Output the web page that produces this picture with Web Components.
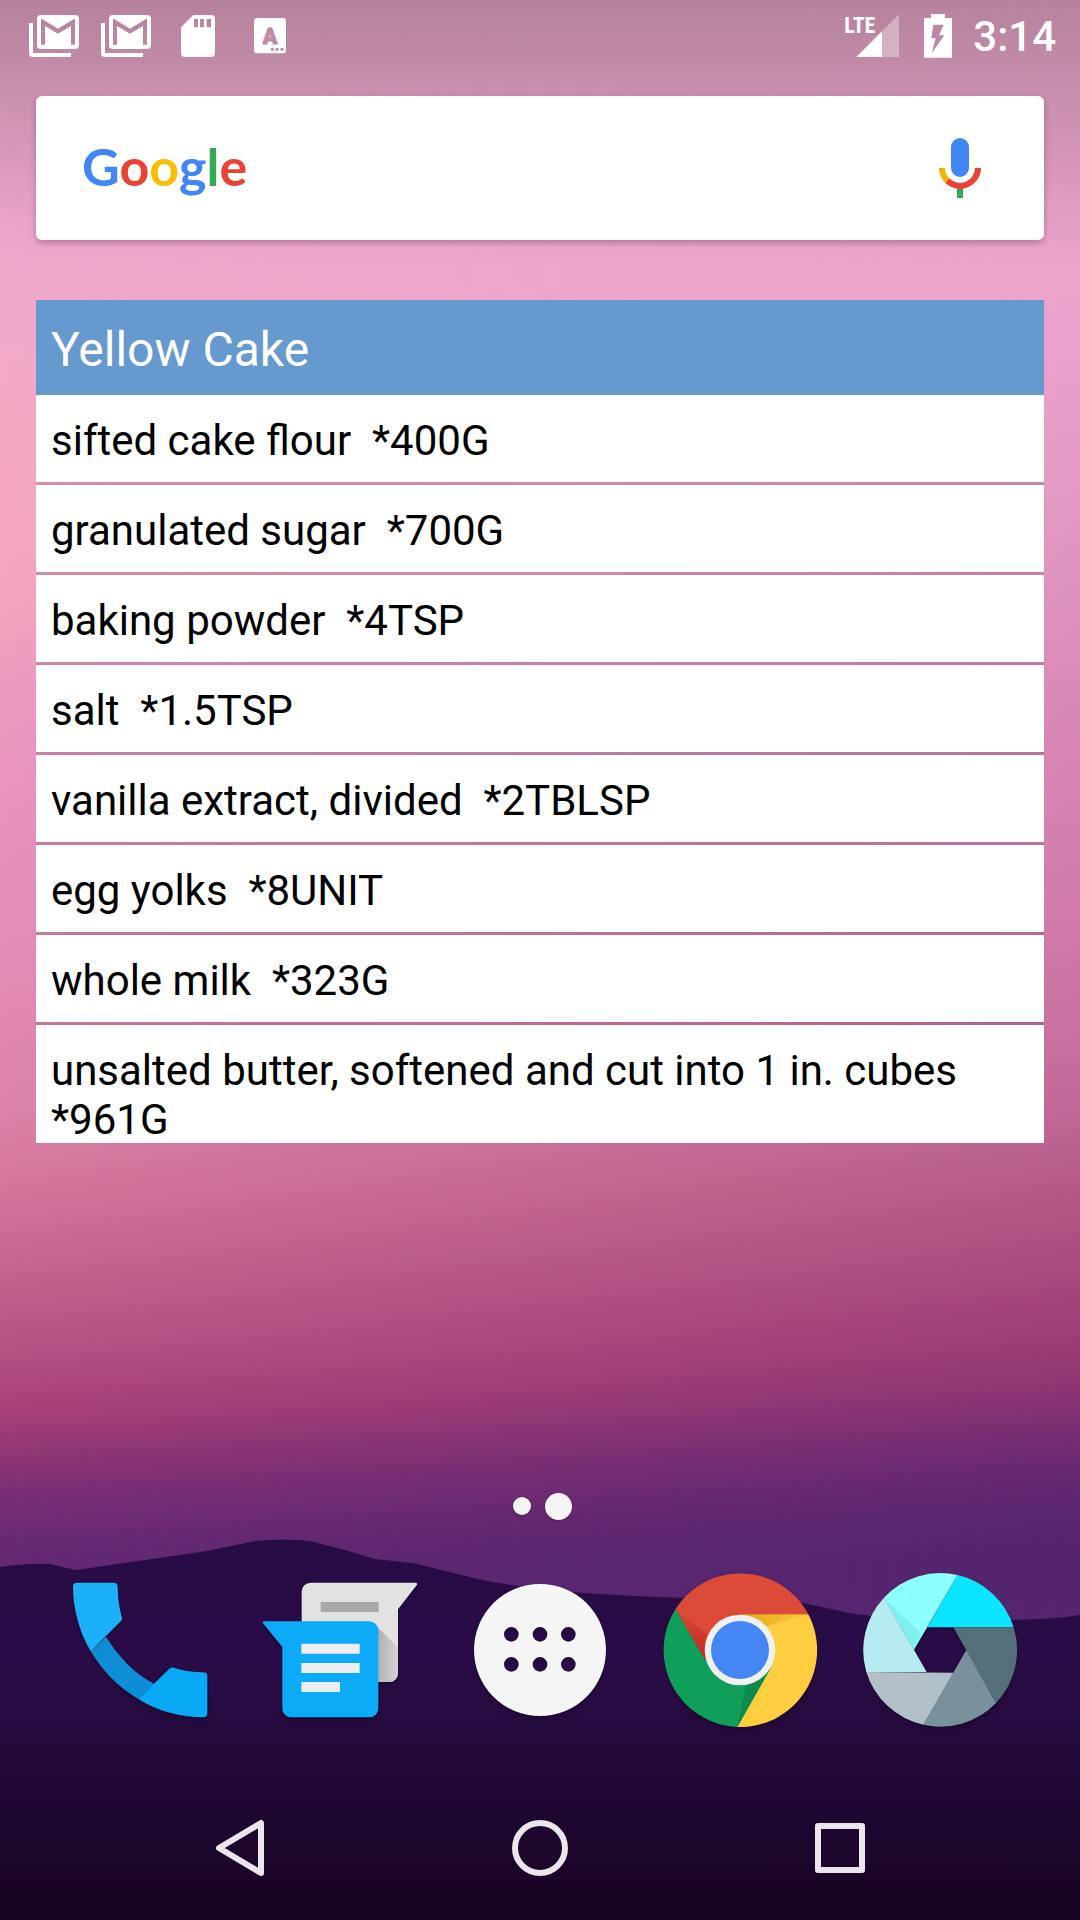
<!DOCTYPE html>
<html lang="en">
<head>
<meta charset="utf-8">
<meta name="viewport" content="width=device-width, initial-scale=1">
<title>Home screen</title>
<style>
  body { margin: 0; font-family: Roboto, "Noto Sans", sans-serif; }
</style>
</head>
<body>
<home-screen>
  <status-bar slot="status" time="3:14"></status-bar>
  <search-widget></search-widget>
  <recipe-widget heading="Yellow Cake">
    <recipe-item>sifted cake flour  *400G</recipe-item>
    <recipe-item>granulated sugar  *700G</recipe-item>
    <recipe-item>baking powder  *4TSP</recipe-item>
    <recipe-item>salt  *1.5TSP</recipe-item>
    <recipe-item>vanilla extract, divided  *2TBLSP</recipe-item>
    <recipe-item>egg yolks  *8UNIT</recipe-item>
    <recipe-item>whole milk  *323G</recipe-item>
    <recipe-item>unsalted butter, softened and cut into 1 in. cubes  *961G</recipe-item>
  </recipe-widget>
  <page-dots slot="bottom"></page-dots>
  <app-dock slot="bottom"></app-dock>
  <nav-bar slot="bottom"></nav-bar>
</home-screen>

<script>
const define = (name, markup, setup) => {
  const template = document.createElement('template');
  template.innerHTML = markup.trim();
  customElements.define(name, class extends HTMLElement {
    constructor() {
      super();
      this.attachShadow({ mode: 'open' }).append(template.content.cloneNode(true));
    }
    connectedCallback() { if (setup) setup(this, this.shadowRoot); }
  });
};

define('wall-paper', `
<style>
  :host { display: block; overflow: hidden; }
  .left, .right, svg { position: absolute; inset: 0; width: 100%; height: 100%; }
  .left { background: linear-gradient(#b6839d 0%, #be88a4 2.5%, #ca92af 5%, #db9abc 8.3%, #eaa4c7 11.5%, #f0a8cb 14%, #f3aac9 18%, #f6a8c2 25%, #f4a4bf 31%, #ec98bf 37%, #e78fbb 46%, #e389b1 53%, #dc82a7 58%, #d4769b 62%, #c4668e 66%, #b75485 70%, #ae457b 72.5%, #a8407a 73.6%, #983a76 75%, #8a3374 76.4%, #7b2f75 77.7%, #672a74 80.4%, #5d2673 85%); }
  .right { background: linear-gradient(#b6839d 0%, #be88a4 2.5%, #c88faf 5%, #d595b8 8.3%, #e49fc5 11.5%, #eba4ca 14%, #e9a2cb 18%, #e49ac5 25%, #de92bf 31%, #d888b7 37%, #d27cad 46%, #ca72a2 53%, #c06796 58%, #b45985 62%, #a84b7e 66%, #a1437a 68%, #993b74 70.4%, #8c3473 72.5%, #752d72 74.7%, #672972 76.4%, #58266e 79%, #53246d 81.5%, #56266f 85%);
    -webkit-mask: linear-gradient(90deg, transparent, #000); mask: linear-gradient(90deg, transparent, #000); }
</style>
<div class="left"></div><div class="right"></div>
<svg viewBox="0 0 1080 1920" preserveAspectRatio="none" aria-hidden="true">
  <defs><linearGradient id="hill" x1="0" y1="0" x2="0" y2="1">
    <stop offset="0" stop-color="#280c44"/><stop offset=".3" stop-color="#2a0c48"/><stop offset=".55" stop-color="#240a3c"/>
    <stop offset=".72" stop-color="#1e0730"/><stop offset="1" stop-color="#190322"/></linearGradient></defs>
  <path fill="url(#hill)" d="M0 1567 Q30 1563 50 1564 L76 1570 L207 1551 L255 1541 Q285 1538 310 1541 L345 1550 L375 1559 L413 1563 L482 1580 Q530 1589 585 1593 Q640 1597 690 1598 L758 1598 L803 1603 L850 1613 Q880 1619 1000 1620 Q1050 1620 1080 1615 V1920 H0Z"/>
</svg>`);

define('home-screen', `
<style>
  :host { display: block; position: relative; isolation: isolate; }
  wall-paper { position: absolute; inset: 0; z-index: -1; }
  .screen { display: flex; flex-direction: column; min-height: 100vh; }
  main { display: flex; flex-direction: column; gap: 60px; padding: 24px 36px; flex: 1; }
</style>
<wall-paper></wall-paper>
<div class="screen">
  <slot name="status"></slot>
  <main><slot></slot></main>
  <footer><slot name="bottom"></slot></footer>
</div>`);

define('status-bar', `
<style>
  :host { display: flex; justify-content: space-between; height: 72px; padding: 0 24px 0 18px; color: #fff; }
  div { display: flex; align-items: center; }
  .system { gap: 18px; }
  svg { display: block; height: 72px; fill: #fff; }
  time { font-size: 42px; line-height: 48px; font-weight: 500; padding-top: 2px; }
  .lte { font: 700 66px "Roboto Condensed", "Liberation Sans Narrow", "Open Sans Condensed", "Liberation Sans", sans-serif; }
  .key { font: 900 64px Roboto, sans-serif; fill: #bf8aa6; stroke: #bf8aa6; stroke-width: 3; stroke-linejoin: round; }
</style>
<div>
  <svg width="72" viewBox="54 0 216 216" role="img" aria-label="Gmail"><path d="M87 69h12v90h114v12H99q-12 0-12-12z"/><path fill-rule="evenodd" d="M123 45H225q12 0 12 12V135q0 12-12 12H123q-12 0-12-12V57q0-12 12-12zM123 57V134H135V78L174 101L213 78V134H225V57H222L174 86L126 57z"/></svg>
  <svg width="72" viewBox="54 0 216 216" role="img" aria-label="Gmail"><path d="M87 69h12v90h114v12H99q-12 0-12-12z"/><path fill-rule="evenodd" d="M123 45H225q12 0 12 12V135q0 12-12 12H123q-12 0-12-12V57q0-12 12-12zM123 57V134H135V78L174 101L213 78V134H225V57H222L174 86L126 57z"/></svg>
  <svg width="72" viewBox="486 0 216 216" role="img" aria-label="SD card"><path fill-rule="evenodd" d="M580 45H633q12 0 12 12V159q0 12-12 12H555q-12 0-12-12V82zM582 57V82H594V57zM600 57V82H612V57zM620 57V82H633V57z"/></svg>
  <svg width="72" viewBox="702 0 216 216" role="img" aria-label="Keyboard"><rect x="762" y="54" width="96" height="106" rx="9"/><text class="key" x="810" y="131" text-anchor="middle">A</text><g fill="#bf8aa6"><circle cx="817" cy="148" r="5"/><circle cx="831" cy="148" r="5"/><circle cx="846" cy="148" r="5"/></g></svg>
</div>
<div class="system">
  <svg width="62" viewBox="240 0 186 216" role="img" aria-label="Signal"><path opacity=".35" d="M363 94L414 43V171H363z"/><path d="M286 171L363 94V171z"/><text class="lte" x="250" y="99">LTE</text></svg>
  <svg width="34" viewBox="480 0 102 216" role="img" aria-label="Charging"><path fill-rule="evenodd" d="M510 42H552V54H573V173H489V54H510zM517 74L511 115H524L512 160L550 106H534L548 74z"/></svg>
  <time></time>
</div>`, (host, root) => { root.querySelector('time').textContent = host.getAttribute('time'); });

define('search-widget', `
<style>
  :host { display: flex; align-items: center; justify-content: space-between; height: 144px; box-sizing: border-box; padding: 0 54px 0 46px; background: #fff; border-radius: 6px; box-shadow: 0 3px 6px rgba(60,20,50,.3); }
  button { border: 0; padding: 0; background: none; display: block; }
  .logo { flex: 1; text-align: left; font: 700 52px/72px Lato, sans-serif; color: #4285f4; padding-bottom: 4px; }
  .r { color: #ea4335; } .y { color: #fbbc05; } .g { color: #34a853; }
  svg { display: block; }
</style>
<button class="logo" aria-label="Google search"><span>G</span><span class="r">o</span><span class="y">o</span><span>g</span><span class="g">l</span><span class="r">e</span></button>
<button aria-label="Voice search"><svg width="60" height="72" viewBox="510 396 180 216">
  <rect x="573" y="414" width="54" height="117" rx="27" fill="#4285f4"/>
  <path d="M591 560h18v34h-18z" fill="#34a853"/>
  <g fill="none" stroke-width="18"><path d="M546 504A54 54 0 0 0 562 542" stroke="#f4b400"/><path d="M562 542A54 54 0 0 0 654 504" stroke="#ea4335"/></g>
</svg></button>`);

define('recipe-widget', `
<style>
  :host { display: block; }
  h1 { margin: 0; padding: 22px 15px 17px; background: #6699cd; color: #fff; font-size: 48px; line-height: 56px; font-weight: 400; }
  .list { height: 748px; overflow: hidden; display: flex; flex-direction: column; }
</style>
<h1></h1>
<div class="list" role="list"><slot></slot></div>`, (host, root) => { root.querySelector('h1').textContent = host.getAttribute('heading'); });

define('recipe-item', `
<style>
  :host { display: block; flex: none; border-bottom: 3px solid rgba(0,0,0,.13); background: #fff; background-clip: padding-box; padding: 21px 15px 17px; font-size: 42px; line-height: 49px; color: #000; }
  slot { display: block; white-space: pre-wrap; }
</style><slot></slot>`, host => host.setAttribute('role', 'listitem'));

define('page-dots', `
<style>
  :host { display: flex; justify-content: center; align-items: center; height: 36px; margin-bottom: 46px; }
  button { width: 36px; height: 36px; padding: 0; border: 0; background: none; display: flex; align-items: center; justify-content: center; }
  i { width: 18px; height: 18px; border-radius: 50%; background: #f5f5f5; box-shadow: 0 1px 3px rgba(0,0,0,.25); }
  .on i { width: 27px; height: 27px; }
</style>
<button aria-label="Page 1"><i></i></button><button class="on" aria-label="Page 2"><i></i></button>`);

define('app-dock', `
<style>
  :host { display: flex; padding: 0 40px 46px; }
  button { flex: 1; padding: 0; border: 0; background: none; display: flex; justify-content: center; }
  svg { display: block; width: 160px; height: 160px; filter: drop-shadow(0 2px 2px rgba(0,0,0,.3)); }
</style>
<button aria-label="Phone"><svg viewBox="30 60 480 480">
  <defs><linearGradient id="fold" x1="0" y1="0" x2="1" y2="1"><stop offset="0" stop-color="#1580b8"/><stop offset=".25" stop-color="#118fd6"/><stop offset="1" stop-color="#0d8cd8"/></linearGradient></defs>
  <g transform="translate(-30 0)">
  <path fill="url(#fold)" d="M152 303L198 260C235 320 285 372 342 401L295 447C235 412 185 360 152 303z"/>
  <path fill="#1cb0f8" d="M112 98H220q12 0 13 12C234 150 238 175 246 203q1 5-3 10L152 304C115 240 99 170 99 110q0-12 13-12z"/>
  <path fill="#08a9f5" d="M295 447L388 356q6-5 14-3Q440 366 490 367q12 0 12 12V490q0 12-12 12C420 502 350 482 295 447z"/></g>
</svg></button>
<button aria-label="Messenger"><svg viewBox="30 60 480 480">
  <defs><linearGradient id="cast"><stop offset="0" stop-color="#aaa"/><stop offset="1" stop-color="#d4d4d4"/></linearGradient></defs>
  <path fill="#e2e2e2" d="M182 98H497q6 0 4 6L444 178V370a26 26 0 0 1-26 26H155V125a27 27 0 0 1 27-27z"/>
  <path fill="url(#cast)" d="M375 225L443 290V370a26 26 0 0 1-26 26H375z"/>
  <path fill="#a8a8a8" d="M212 156h174v30H212z"/>
  <path fill="#0dabf7" d="M42 214H358a27 27 0 0 1 27 27V475a27 27 0 0 1-27 27H124a27 27 0 0 1-27-27V291L39 220q-3-6 3-6z"/>
  <path fill="#eee" d="M154 281h175v30H154zM154 339h175v30H154zM154 396h116v30H154z"/>
</svg></button>
<button aria-label="Apps"><svg viewBox="30 60 480 480">
  <path transform="translate(0 0)" fill="#f5f5f5" fill-rule="evenodd" d="M72 300a198 198 0 1 0 396 0a198 198 0 1 0-396 0zM162 253a22 22 0 1 0 44 0a22 22 0 1 0-44 0zM248 253a22 22 0 1 0 44 0a22 22 0 1 0-44 0zM333 253a22 22 0 1 0 44 0a22 22 0 1 0-44 0zM162 343a22 22 0 1 0 44 0a22 22 0 1 0-44 0zM248 343a22 22 0 1 0 44 0a22 22 0 1 0-44 0zM333 343a22 22 0 1 0 44 0a22 22 0 1 0-44 0z"/>
</svg></button>
<button aria-label="Chrome"><svg viewBox="30 60 480 480">
  <defs><linearGradient id="rs" x1="0" y1="0" x2="0" y2="1"><stop offset="0" stop-color="#db4a39"/><stop offset="1" stop-color="#c0281f"/></linearGradient>
  <linearGradient id="ys"><stop offset="0" stop-color="#e6a91f"/><stop offset="1" stop-color="#fbc83a"/></linearGradient></defs>
  <path fill="#ffcd40" d="M475 193A231 231 0 0 1 262 531L270 193z"/>
  <path fill="url(#ys)" d="M270 193H475L340 230z"/>
  <path fill="#109f5b" d="M77 176A231 231 0 0 0 262 531L362 354L270 300L166 330z"/>
  <path fill="#0d8a4d" d="M290 395L362 354L262 531z"/>
  <path fill="#dc4a38" d="M77 176A231 231 0 0 1 475 193H270V300L166 330z"/>
  <path fill="url(#rs)" d="M77 176L190 270L166 330z"/>
  <circle cx="270" cy="300" r="106" fill="#f1f1f1"/><circle cx="270" cy="300" r="87" fill="#4486f4"/>
</svg></button>
<button aria-label="Camera"><svg viewBox="30 60 480 480">
  <path fill="#8dffff" d="M102 143A231 231 0 0 1 323 75L192 299z"/>
  <path fill="#80eff0" d="M102 143L212 250L192 299z"/>
  <path fill="#0ae6ff" d="M323 75A231 231 0 0 1 491 232H232z"/>
  <path fill="#56707b" d="M491 232A231 231 0 0 1 438 459L310 232z"/>
  <path fill="#7a919d" d="M438 459A231 231 0 0 1 220 524L349 300z"/>
  <path fill="#b2c0c7" d="M220 524A231 231 0 0 1 49 366L310 368z"/>
  <path fill="#b6ecf1" d="M49 366A231 231 0 0 1 102 143L230 366z"/>
</svg></button>`);

define('nav-bar', `
<style>
  :host { display: flex; height: 144px; padding: 0 90px; }
  button { flex: 1; padding: 0; border: 0; background: none; display: flex; align-items: center; justify-content: center; }
  svg { width: 72px; height: 72px; fill: none; stroke: #ebe6ed; stroke-width: 6; stroke-linejoin: round; }
</style>
<button aria-label="Back"><svg viewBox="0 0 72 72"><path d="M57 11V61L15 36z"/></svg></button>
<button aria-label="Home"><svg viewBox="0 0 72 72"><circle cx="36" cy="36" r="25"/></svg></button>
<button aria-label="Recents"><svg viewBox="0 0 72 72"><rect x="14" y="14" width="44" height="44"/></svg></button>`);
</script>
</body>
</html>
